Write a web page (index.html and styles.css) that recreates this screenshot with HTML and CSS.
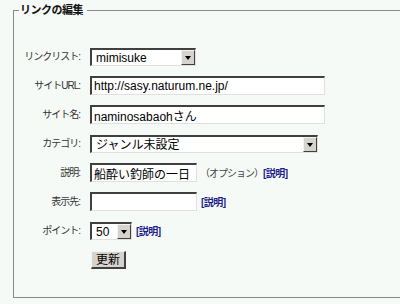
FILE: index.html
```html
<!DOCTYPE html>
<html>
<head>
    <meta charset="utf-8">
    <link rel="stylesheet" href="styles.css">
</head>
<body>
    <fieldset class="box">
        <legend class="box-title">リンクの編集</legend>
        <!-- Link edit form -->
        <div class="form">
            <label class="lbl">リンクリスト:</label>
            <div class="ctl">
                <span class="combo combo-list">
                    <select><option>mimisuke</option></select>
                    <span class="drop"></span>
                </span>
            </div>

            <label class="lbl">サイトURL:</label>
            <div class="ctl"><input class="txt txt-long" type="text" value="http://sasy.naturum.ne.jp/"></div>

            <label class="lbl">サイト名:</label>
            <div class="ctl"><input class="txt txt-long" type="text" value="naminosabaohさん"></div>

            <label class="lbl">カテゴリ:</label>
            <div class="ctl">
                <span class="combo combo-cat">
                    <select><option>ジャンル未設定</option></select>
                    <span class="drop"></span>
                </span>
            </div>

            <label class="lbl">説明:</label>
            <div class="ctl">
                <input class="txt txt-short" type="text" value="船酔い釣師の一日">
                <span class="note">（オプション）</span><a class="help" href="#">[説明]</a>
            </div>

            <label class="lbl">表示先:</label>
            <div class="ctl">
                <input class="txt txt-short" type="text" value="">
                <a class="help" href="#">[説明]</a>
            </div>

            <label class="lbl">ポイント:</label>
            <div class="ctl">
                <span class="combo combo-point">
                    <select><option>50</option></select>
                    <span class="drop"></span>
                </span>
                <a class="help" href="#">[説明]</a>
            </div>

            <span></span>
            <div class="ctl"><button class="btn">更新</button></div>
        </div>
    </fieldset>
</body>
</html>
```

FILE: styles.css
```css
body {
    margin: 0;
    background: #f6faf6;
    font-family: "Liberation Sans", "Noto Sans CJK JP", sans-serif;
    color: #222;
    overflow: hidden;
}

.box {
    margin: 4px 0 0 13px;
    padding: 0;
    width: calc(100% - 13px);
    height: 294px;
    box-sizing: border-box;
    border: 1px solid #8a8a8a;
    border-right: none;
    box-shadow: 0 1px 0 #c8cbc8;
}

.box-title {
    margin-left: 5px;
    padding: 0 4px 0 1px;
    font-size: 11px;
    line-height: 13px;
    font-weight: bold;
    letter-spacing: -0.5px;
    color: #111;
}

.form {
    display: grid;
    grid-template-columns: 66px auto;
    column-gap: 10px;
    row-gap: 10px;
    padding-top: 30px;
    grid-auto-rows: 19px;
}

.lbl {
    font-size: 10px;
    line-height: 19px;
    text-align: right;
    letter-spacing: -1px;
    white-space: nowrap;
    color: #333;
}

.ctl {
    display: flex;
    align-items: center;
    height: 19px;
}

.txt {
    box-sizing: border-box;
    height: 19px;
    margin: 0;
    padding: 0 2px;
    border-style: solid;
    border-width: 2px 1px 1px 2px;
    border-color: #404040 #e0e0e0 #e0e0e0 #404040;
    background: #fff;
    font-family: "Liberation Sans", "Noto Sans CJK JP", sans-serif;
    font-size: 12px;
    color: #000;
    outline: none;
}

.txt-long {
    width: 235px;
}

.txt-short {
    width: 107px;
}

.combo {
    position: relative;
    display: inline-block;
    height: 18px;
}

.combo select {
    appearance: none;
    -webkit-appearance: none;
    box-sizing: border-box;
    width: 100%;
    height: 18px;
    margin: 0;
    padding: 0 0 0 4px;
    border-style: solid;
    border-width: 2px 1px 1px 2px;
    border-color: #404040 #e0e0e0 #e0e0e0 #404040;
    border-radius: 0;
    background: #fff;
    font-family: "Liberation Sans", "Noto Sans CJK JP", sans-serif;
    font-size: 12px;
    color: #000;
}

.combo-list {
    width: 106px;
}

.combo-cat {
    width: 228px;
}

.combo-point {
    width: 42px;
}

.drop {
    position: absolute;
    right: 1px;
    top: 2px;
    width: 14px;
    height: 15px;
    box-sizing: border-box;
    background: #d6d3cc;
    border-style: solid;
    border-width: 1px;
    border-color: #f4f4f4 #404040 #404040 #f4f4f4;
}

.drop::after {
    content: "";
    position: absolute;
    left: 3px;
    top: 5px;
    border-left: 3.5px solid transparent;
    border-right: 3.5px solid transparent;
    border-top: 4px solid #000;
}

.note {
    margin-left: 3px;
    font-size: 10px;
    color: #444;
    letter-spacing: -1px;
}

.help {
    margin-left: 4px;
    font-size: 10px;
    font-weight: bold;
    letter-spacing: -0.5px;
    color: #1c1c8a;
    text-decoration: none;
}

.note + .help {
    margin-left: 0;
}

.btn {
    box-sizing: border-box;
    width: 35px;
    height: 18px;
    margin: 0 0 0 1px;
    padding: 0;
    background: #d6d3cc;
    border-style: solid;
    border-width: 1px 2px 2px 1px;
    border-color: #f4f4f4 #404040 #404040 #f4f4f4;
    font-family: "Noto Sans CJK JP", sans-serif;
    font-size: 12px;
    line-height: 14px;
    color: #000;
}
```
